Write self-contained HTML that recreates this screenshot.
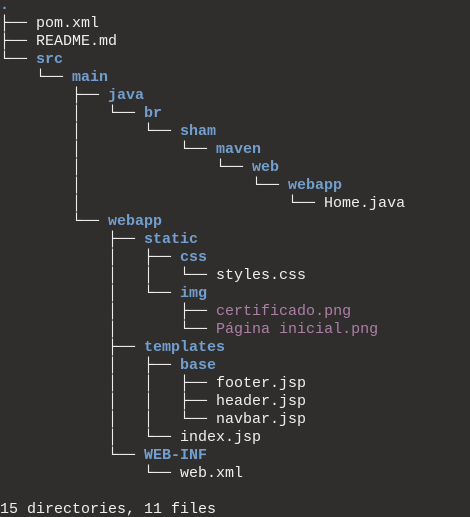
<!DOCTYPE html>
<html><head><meta charset="utf-8"><style>
html,body{margin:0;padding:0;background:#302e2c;width:470px;height:517px;overflow:hidden}
pre{margin:-3px 0 0 0;padding:0;font-family:"Liberation Mono","DejaVu Sans Mono",monospace;font-size:15px;line-height:18px;color:#eeeeec;white-space:pre}
b{color:#729fcf;font-weight:bold}
i{color:#ad7fa8;font-style:normal}
</style></head><body><pre><b>.</b>
├── pom.xml
├── README.md
└── <b>src</b>
    └── <b>main</b>
        ├── <b>java</b>
        │   └── <b>br</b>
        │       └── <b>sham</b>
        │           └── <b>maven</b>
        │               └── <b>web</b>
        │                   └── <b>webapp</b>
        │                       └── Home.java
        └── <b>webapp</b>
            ├── <b>static</b>
            │   ├── <b>css</b>
            │   │   └── styles.css
            │   └── <b>img</b>
            │       ├── <i>certificado.png</i>
            │       └── <i>Página inicial.png</i>
            ├── <b>templates</b>
            │   ├── <b>base</b>
            │   │   ├── footer.jsp
            │   │   ├── header.jsp
            │   │   └── navbar.jsp
            │   └── index.jsp
            └── <b>WEB-INF</b>
                └── web.xml

15 directories, 11 files
</pre></body></html>
